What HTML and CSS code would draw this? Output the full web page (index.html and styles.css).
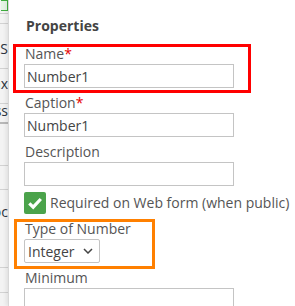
FILE: index.html
```html
<!DOCTYPE html>
<html lang="en">
<head>
    <meta charset="UTF-8">
    <title>Properties</title>
    <link rel="stylesheet" href="styles.css">
</head>
<body>
    <!-- list behind the panel, mostly covered -->
    <div class="list-strip">
        <div class="list-row row-head"><span class="flag"></span></div>
        <div class="list-row row-a"></div>
        <div class="list-row row-b"><span>STATUS</span></div>
        <div class="list-row row-c"><span>Max</span></div>
        <div class="list-row row-d"><span>Class</span></div>
        <div class="list-row row-e"></div>
        <div class="list-row row-f"></div>
        <div class="list-row row-g"><span>Doc</span></div>
        <div class="list-row row-h"></div>
        <div class="list-row row-i"></div>
    </div>

    <div class="panel">
        <h2 class="panel-title">Properties</h2>

        <div class="field highlight-red">
            <label class="field-label">Name<span class="req">*</span></label>
            <input class="text-input" type="text" value="Number1">
        </div>

        <div class="field">
            <label class="field-label">Caption<span class="req">*</span></label>
            <input class="text-input" type="text" value="Number1">
        </div>

        <div class="field">
            <label class="field-label">Description</label>
            <input class="text-input" type="text" value="">
        </div>

        <div class="check-row">
            <span class="check-box">
                <svg width="16" height="16" viewBox="0 0 16 16"><path d="M2.3 8.3 L6.2 12.2 L13.8 4" fill="none" stroke="#fff" stroke-width="3.2"/></svg>
            </span>
            <span class="check-text">Required on Web form (when public)</span>
        </div>

        <div class="field highlight-orange">
            <label class="field-label">Type of Number</label>
            <div class="select-box">
                <span>Integer</span>
                <svg width="10" height="6" viewBox="0 0 10 6"><path d="M1 1 L5 5 L9 1" fill="none" stroke="#444" stroke-width="1.5"/></svg>
            </div>
        </div>

        <div class="field">
            <label class="field-label">Minimum</label>
            <input class="text-input" type="text" value="">
        </div>
    </div>
</body>
</html>
```

FILE: styles.css
```css
:root {
    --text: #555;
    --input-text: #444;
    --line: #c4c4c4;
    --red: #ff0000;
    --orange: #ff8000;
    --green: #4ba34b;
}

body {
    margin: 0;
    display: flex;
    height: 306px;
    overflow: hidden;
    font-family: 'Open Sans', 'Noto Sans', sans-serif;
    font-size: 14px;
    color: var(--text);
    background: #fff;
}

/* 左側列表 */
.list-strip {
    width: 8px;
    flex: none;
    background: #f3f3f3;
    overflow: hidden;
}

.list-row {
    display: flex;
    justify-content: flex-end;
    align-items: center;
    white-space: nowrap;
    border-bottom: 1px solid #d2d2d2;
    color: #2c3440;
    box-sizing: border-box;
}

.row-head { height: 14px; align-items: flex-start; border-bottom-color: #cfcfcf; }
.row-a { height: 10px; }
.row-b { height: 45px; padding-top: 5px; }
.row-c { height: 35px; padding-bottom: 5px; }
.row-d { height: 20px; padding-bottom: 5px; border-bottom: 2px solid #b8b8b8; }
.row-e { height: 42px; }
.row-f { height: 24px; }
.row-g { height: 78px; align-items: flex-start; padding-top: 12px; }
.row-h { height: 25px; }
.row-i { height: 40px; }

.flag {
    display: block;
    width: 7px;
    height: 11px;
    box-sizing: border-box;
    border: 1px solid #3fae3f;
    border-left: none;
    background: #e4f4e4;
}

/* 屬性面板 */
.panel {
    flex: 1;
    border-left: 1px solid #d8d8d8;
    box-shadow: -2px 0 4px rgba(0, 0, 0, 0.08);
    padding: 15px 0 0 15px;
}

.panel-title {
    margin: 0 0 8px 2px;
    font-size: 14px;
    line-height: 21px;
    font-weight: bold;
    color: #444;
}

.field {
    position: relative;
    width: 210px;
    margin-bottom: 5px;
}

.field-label {
    display: block;
    height: 20px;
    line-height: 20px;
    padding-left: 1px;
}

.req {
    color: #e60000;
}

.text-input {
    display: block;
    width: 210px;
    height: 24px;
    box-sizing: border-box;
    margin: 0;
    border: 1px solid var(--line);
    padding: 0 0 0 2px;
    font-family: inherit;
    font-size: 14px;
    color: var(--input-text);
    background: #fff;
    outline: none;
}

.check-row {
    display: flex;
    align-items: center;
    gap: 4px;
    height: 23px;
    margin-bottom: 5px;
    white-space: nowrap;
}

.check-box {
    width: 22px;
    height: 22px;
    border-radius: 2px;
    background: var(--green);
    display: flex;
    align-items: center;
    justify-content: center;
}

.select-box {
    width: 76px;
    height: 24px;
    box-sizing: border-box;
    border: 1px solid var(--line);
    border-radius: 2px;
    padding: 0 6px 0 3px;
    display: flex;
    align-items: center;
    justify-content: space-between;
    color: var(--input-text);
}

/* 標註框 */
.highlight-red::after,
.highlight-orange::after {
    content: '';
    position: absolute;
    pointer-events: none;
}

.highlight-red::after {
    top: 0;
    left: -11px;
    right: -17px;
    bottom: -5px;
    border: 3px solid var(--red);
}

.highlight-orange::after {
    top: 0;
    left: -10px;
    right: 79px;
    bottom: -6px;
    border: 3px solid var(--orange);
}
```
